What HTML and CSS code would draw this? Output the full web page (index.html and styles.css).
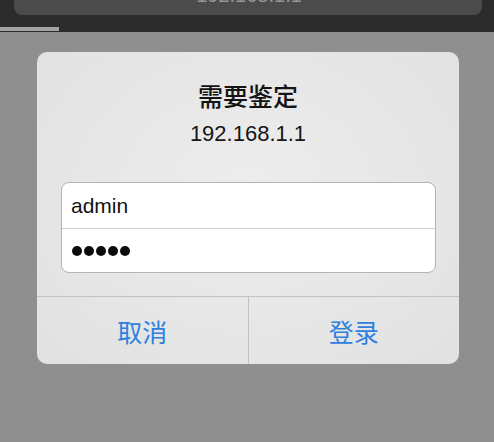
FILE: index.html
```html
<!DOCTYPE html>
<html lang="zh">
<head>
<meta charset="utf-8">
<title>需要鉴定</title>
<link rel="stylesheet" href="styles.css">
</head>
<body>
<div class="topbar">
  <div class="url">
    <span class="url-text">192.168.1.1</span>
    <span class="url-close">✕</span>
  </div>
  <div class="progress"></div>
</div>
<div class="stage">
  <div class="dialog">
    <div class="title">需要鉴定</div>
    <div class="host">192.168.1.1</div>
    <div class="fields">
      <div class="field">admin</div>
      <div class="field pw"><span class="dot"></span><span class="dot"></span><span class="dot"></span><span class="dot"></span><span class="dot"></span></div>
    </div>
    <div class="actions">
      <div class="btn">取消</div>
      <div class="btn">登录</div>
    </div>
  </div>
</div>
</body>
</html>
```

FILE: styles.css
```css
* { box-sizing: border-box; }
html, body {
  margin: 0;
  padding: 0;
  width: 494px;
  height: 442px;
  overflow: hidden;
  font-family: "Liberation Sans", "Noto Sans CJK SC", sans-serif;
}
.topbar {
  height: 32px;
  background: #2c2c2c;
}
.url {
  height: 15px;
  margin: 0 12px 0 14px;
  background: #4b4b4b;
  border-radius: 0 0 8px 8px;
  overflow: hidden;
  display: flex;
  justify-content: center;
  align-items: flex-start;
  padding-left: 40px;
}
.url-text {
  margin-top: -15px;
  font-size: 20px;
  line-height: 20px;
  color: #959595;
  flex: 1;
  text-align: center;
}
.url-close {
  margin-top: -15px;
  font-size: 22px;
  line-height: 20px;
  color: #a0a0a0;
  width: 30px;
  margin-right: 8px;
  text-align: center;
}
.progress {
  margin-top: 12px;
  width: 59px;
  height: 4px;
  background: #a3a3a3;
}
.stage {
  height: 410px;
  background: #8f8f8f;
  padding-top: 20px;
}
.dialog {
  margin-left: 37px;
  width: 422px;
  border-radius: 10px;
  overflow: hidden;
  background: radial-gradient(ellipse at 50% 45%, #ededed 0%, #e6e6e6 60%, #e1e1e1 100%);
  padding-top: 30px;
  text-align: center;
}
.title {
  font-size: 25px;
  line-height: 30px;
  font-weight: 500;
  color: #141414;
}
.host {
  margin-top: 9px;
  font-size: 22px;
  line-height: 26px;
  color: #161616;
}
.fields {
  margin: 35px 23px 23px 24px;
  border: 1px solid #b4b4b4;
  border-radius: 8px;
  background: #fff;
  overflow: hidden;
  text-align: left;
}
.field {
  height: 45px;
  padding-left: 9px;
  font-size: 21px;
  line-height: 45px;
  color: #111;
  display: flex;
  align-items: center;
}
.field.pw {
  height: 44px;
  border-top: 1px solid #cfcfcf;
  gap: 2px;
  padding-left: 10px;
}
.dot {
  width: 10px;
  height: 10px;
  border-radius: 50%;
  background: #0c0c0c;
}
.actions {
  display: flex;
  border-top: 1px solid #c2c2c2;
  height: 68px;
}
.btn {
  flex: 1;
  display: flex;
  align-items: center;
  justify-content: center;
  font-size: 25px;
  color: #2d80de;
}
.btn + .btn {
  border-left: 1px solid #c2c2c2;
}
```
